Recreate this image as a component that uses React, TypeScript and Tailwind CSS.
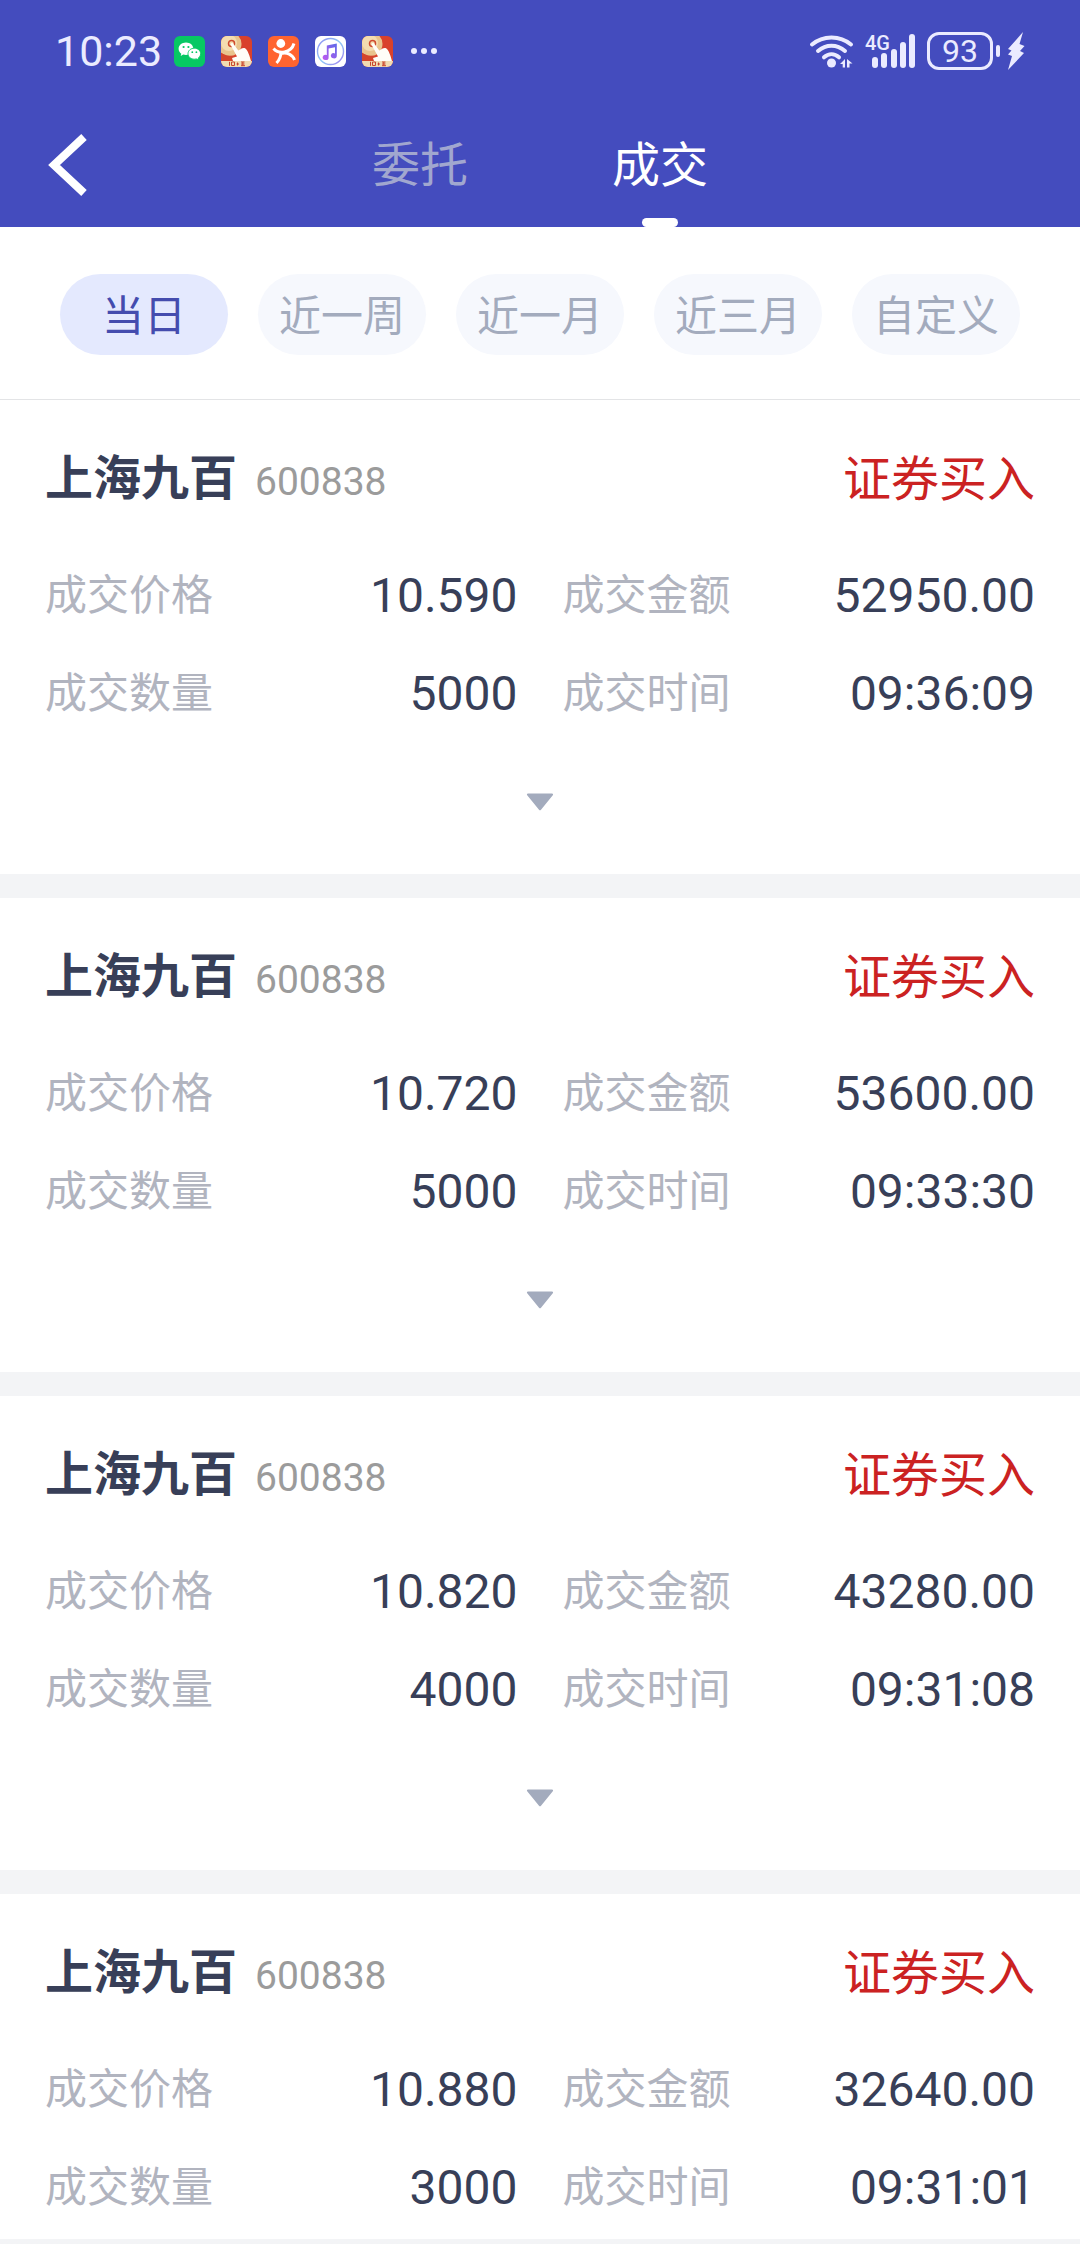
// ─────────────────────────────────────────────────────────────
// App.tsx
// 成交查询页面：状态栏、委托/成交切换、日期筛选、成交列表
// ─────────────────────────────────────────────────────────────

import { useState } from 'react';

interface Deal {
  name:   string;
  code:   string;
  side:   string;
  price:  string;
  amount: string;
  volume: string;
  time:   string;
}

const DEALS: Deal[] = [
  { name: '上海九百', code: '600838', side: '证券买入', price: '10.590', amount: '52950.00', volume: '5000', time: '09:36:09' },
  { name: '上海九百', code: '600838', side: '证券买入', price: '10.720', amount: '53600.00', volume: '5000', time: '09:33:30' },
  { name: '上海九百', code: '600838', side: '证券买入', price: '10.820', amount: '43280.00', volume: '4000', time: '09:31:08' },
  { name: '上海九百', code: '600838', side: '证券买入', price: '10.880', amount: '32640.00', volume: '3000', time: '09:31:01' },
];

const TABS = ['委托', '成交'];
const RANGES = ['当日', '近一周', '近一月', '近三月', '自定义'];

/* ── 状态栏图标 ── */

function WechatIcon() {
  return (
    <svg viewBox="0 0 31 31" className="size-[31px]" aria-hidden="true">
      <rect width="31" height="31" rx="6" fill="#07c863" />
      <path d="M12 6.5c-4.2 0-7.4 2.8-7.4 6.3 0 2 1 3.7 2.7 4.9l-.6 2.2 2.5-1.3c.9.3 1.8.4 2.8.4 4.2 0 7.4-2.8 7.4-6.2S16.2 6.5 12 6.5z" fill="#fff" />
      <path d="M20.3 12.2c-3.5 0-6.3 2.4-6.3 5.5s2.8 5.5 6.3 5.5c.8 0 1.5-.1 2.2-.3l2.2 1.2-.5-2c1.5-1 2.4-2.6 2.4-4.4 0-3.1-2.8-5.5-6.3-5.5z" fill="#fff" stroke="#07c863" strokeWidth="0.9" />
      <circle cx="9.6" cy="11" r="1.1" fill="#07c863" />
      <circle cx="14.4" cy="11" r="1.1" fill="#07c863" />
      <circle cx="18.3" cy="16.2" r="0.9" fill="#07c863" />
      <circle cx="22.4" cy="16.2" r="0.9" fill="#07c863" />
    </svg>
  );
}

function BrokerIcon() {
  return (
    <svg viewBox="0 0 31 31" className="size-[31px] rounded-md" aria-hidden="true">
      <rect width="31" height="31" fill="#d9412b" />
      <circle cx="8.5" cy="8" r="12" fill="#e9c48d" />
      <circle cx="8" cy="7" r="8" fill="#f4dcb0" />
      <circle cx="10.5" cy="7.5" r="3" fill="none" stroke="#cf4a2e" strokeWidth="1.5" />
      <path d="M0 17l6 2.500 7 .5v5H0z" fill="#d4452c" />
      <path d="M10 7.500c1-.8 2-.4 2.500.5l4.800 6.500c2.200-1.500 4.200-3 6.200-2.500 2.500 1 4 5 5 8l1.500 5H12l-1-3 5-1.500-6.300-11.500c-.3-.6-.1-1.200.3-1.500z" fill="#fffdf8" />
      <path d="M0 25h31v6H0z" fill="#f1dbb2" />
      <path d="M8.500 25.800v4M10.500 26h3v3.500h-3zM15.500 28h2.500M16.500 26.500v3M20 26h3.500M20 28h3.500M20 29.700h4M21.800 26v3.700" fill="none" stroke="#c8452e" strokeWidth="1" />
    </svg>
  );
}

function ReviewIcon() {
  return (
    <svg viewBox="0 0 31 31" className="size-[31px]" aria-hidden="true">
      <rect width="31" height="31" rx="6" fill="#ff6430" />
      <circle cx="12.8" cy="7.5" r="4.4" fill="#fff" />
      <path d="M5.500 12.500c3 3.500 7 4.300 11 3.500 4.500-.9 8-3.500 9.500-8.500" fill="none" stroke="#fff" strokeWidth="3" />
      <path d="M13 15.500c0 4.500-1.500 8.500-4.500 11.500M13 17.500c6-1.500 11.500 1 13.500 6.500" fill="none" stroke="#fff" strokeWidth="3" />
    </svg>
  );
}

function MusicIcon() {
  return (
    <svg viewBox="0 0 31 31" className="size-[31px]" aria-hidden="true">
      <defs>
        <linearGradient id="ring" x1="0" y1="0" x2="1" y2="1">
          <stop offset="0" stopColor="#8f8af2" />
          <stop offset="0.5" stopColor="#8ecbf5" />
          <stop offset="1" stopColor="#a07cf0" />
        </linearGradient>
        <linearGradient id="note" x1="0" y1="1" x2="1" y2="0">
          <stop offset="0" stopColor="#c25af0" />
          <stop offset="1" stopColor="#5a6ae8" />
        </linearGradient>
      </defs>
      <rect width="31" height="31" rx="6" fill="#fff" />
      <circle cx="15.5" cy="15.5" r="13" fill="none" stroke="url(#ring)" strokeWidth="1.4" />
      <path d="M11.800 9.500l10-2v12.300a3 2.600 0 1 1-1.800-2.400V11.200l-6.400 1.300v9a3 2.600 0 1 1-1.800-2.400z" fill="url(#note)" />
    </svg>
  );
}

function WifiIcon() {
  return (
    <svg viewBox="0 0 46 36" className="h-9 w-[46px]" aria-hidden="true">
      <g fill="none" stroke="#ebebff" strokeWidth="4" strokeLinecap="round">
        <path d="M3 11.500c11-9.500 28-9.500 39 0" />
        <path d="M9 18c8-7 19-7 27 0" />
        <path d="M15 24.300c4.500-4 10.500-4 15 0" />
      </g>
      <circle cx="22.5" cy="30" r="4.5" fill="#ebebff" />
      <path d="M36 26v8.500h-2.300V31H31zM38 26l5.500 4.500H40.500v4H38z" fill="#ebebff" />
    </svg>
  );
}

function SignalIcon() {
  return (
    <div className="relative">
      <svg viewBox="0 0 52 36" className="h-9 w-[52px]" fill="#ebebff" aria-hidden="true">
        <rect x="7" y="24" width="6" height="11" rx="3" />
        <rect x="16" y="20" width="6" height="15" rx="3" />
        <rect x="26" y="16" width="6" height="19" rx="3" />
        <rect x="35" y="9" width="6" height="26" rx="3" />
        <rect x="44" y="1" width="6" height="34" rx="3" />
      </svg>
      <span className="absolute -top-1 left-0 text-[20px] font-medium leading-7">4G</span>
    </div>
  );
}

function StatusBar() {
  return (
    <div className="flex h-[102px] items-center justify-between px-[55px] text-[#ebebff]">
      <div className="flex items-center gap-4">
        <span className="-mr-1 text-[43px] leading-[52px]">10:23</span>
        <WechatIcon />
        <BrokerIcon />
        <ReviewIcon />
        <MusicIcon />
        <BrokerIcon />
        <svg viewBox="0 0 30 6" className="h-1.5 w-[30px]" fill="currentColor" aria-hidden="true">
          <circle cx="5" cy="3" r="3" />
          <circle cx="15" cy="3" r="3" />
          <circle cx="25" cy="3" r="3" />
        </svg>
      </div>
      <div className="flex items-center">
        <WifiIcon />
        <div className="mx-2.5"><SignalIcon /></div>
        <div className="flex h-[38px] w-[66px] items-center justify-center rounded-xl border-3 border-[#ebebff] text-[32px] leading-8">
          93
        </div>
        <div className="ml-[3px] h-3 w-1 rounded-full bg-[#ebebff]" />
        <svg viewBox="0 0 18 38" className="ml-[7px] h-[38px] w-[18px]" fill="currentColor" aria-hidden="true">
          <path d="M16 0L1 17l3.500 1.500L1 22.500l4 1.500L1 38l16-17-4-2 4.500-5-5-2z" />
        </svg>
      </div>
    </div>
  );
}

function Field({ label, value }: { label: string; value: string }) {
  return (
    <div className="flex h-14 items-center justify-between leading-[56px]">
      <dt className="text-[42px] text-[#b1b4bf]">{label}</dt>
      <dd className="text-[48px] text-[#383f58]">{value}</dd>
    </div>
  );
}

function DealCard({ deal }: { deal: Deal }) {
  return (
    <article className="shrink-0 bg-white px-[45px] pt-12">
      <div className="flex h-16 items-center justify-between leading-[64px]">
        <h2 className="flex items-baseline gap-[18px]">
          <span className="text-[48px] font-bold text-[#383f58]">{deal.name}</span>
          <span className="text-[39px] font-normal text-[#9b9b9b]">{deal.code}</span>
        </h2>
        <span className="text-[48px] text-[#cb2222]">{deal.side}</span>
      </div>
      <dl className="mt-14 grid grid-cols-2 gap-x-[45px] gap-y-[42px]">
        <Field label="成交价格" value={deal.price} />
        <Field label="成交金额" value={deal.amount} />
        <Field label="成交数量" value={deal.volume} />
        <Field label="成交时间" value={deal.time} />
      </dl>
      <button type="button" aria-label="展开" className="flex h-[152px] w-full items-center justify-center pt-2">
        <svg viewBox="0 0 28 18" className="h-[18px] w-7" aria-hidden="true">
          <path d="M2 .5h24c1 0 1.400 1 .8 1.700L15 16.800c-.6.7-1.400.7-2 0L1.200 2.200C.6 1.500 1 .5 2 .5z" fill="#a3abbd" />
        </svg>
      </button>
    </article>
  );
}

export default function App() {
  const [tab, setTab] = useState('成交');
  const [range, setRange] = useState('当日');

  return (
    <div className="flex h-screen flex-col overflow-hidden bg-[#f3f4f6] font-[Roboto,'Noto_Sans_CJK_SC',sans-serif]">
      <header className="bg-[#444cbe]">
        <StatusBar />
        <nav className="grid h-[125px] grid-cols-[1fr_auto_1fr]">
          <button type="button" aria-label="返回" className="flex items-center pl-12">
            <svg viewBox="0 0 40 62" className="h-[62px] w-10" aria-hidden="true">
              <path d="M36 3L6 31l30 28" fill="none" stroke="#fff" strokeWidth="8" />
            </svg>
          </button>
          <div className="flex">
            {TABS.map((item) => (
              <button
                key={item}
                type="button"
                onClick={() => setTab(item)}
                className={`relative w-60 pt-0.5 text-[48px] leading-[64px] ${tab === item ? 'text-white' : 'text-[#a1a7cf]'}`}
              >
                {item}
                {tab === item && (
                  <span className="absolute bottom-0 left-1/2 h-[9px] w-9 -translate-x-1/2 rounded-full bg-white" />
                )}
              </button>
            ))}
          </div>
        </nav>
      </header>

      {/* 日期筛选 */}
      <div className="flex gap-[30px] border-b border-[#e3e4e6] bg-white px-[60px] pb-11 pt-[47px]">
        {RANGES.map((item) => (
          <button
            key={item}
            type="button"
            onClick={() => setRange(item)}
            className={`h-[81px] flex-1 whitespace-nowrap rounded-full pt-1 text-[42px] leading-[56px] ${
              range === item ? 'bg-[#e4e9fe] text-[#444cae]' : 'bg-[#f6f8fd] text-[#a3abbd]'
            }`}
          >
            {item}
          </button>
        ))}
      </div>

      {/* 成交列表 */}
      <main className="mb-[5px] flex min-h-0 flex-1 flex-col gap-6 overflow-hidden">
        {DEALS.map((deal) => (
          <DealCard key={deal.time} deal={deal} />
        ))}
      </main>
    </div>
  );
}
